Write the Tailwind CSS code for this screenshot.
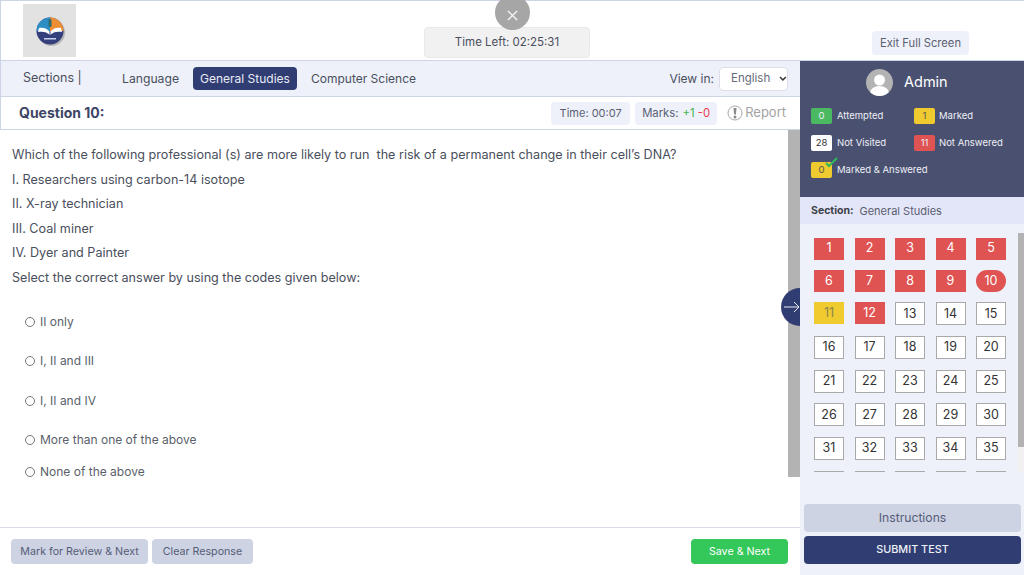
<!DOCTYPE html>
<html lang="en">

<head>
    <meta charset="UTF-8">
    <meta name="viewport" content="width=device-width, initial-scale=1.0">
    <title>Online Test</title>
    <script src="https://cdn.jsdelivr.net/npm/@tailwindcss/browser@4"></script>
</head>

<body class="bg-white font-['Inter','Liberation_Sans',sans-serif] text-[#4a4f5c] overflow-hidden">
    <div class="relative w-[1024px] h-[575px] overflow-hidden flex flex-col">

        <!-- top header -->
        <header class="relative h-[61px] shrink-0 border-t border-l border-b border-[#cdd4e6] flex">
            <div class="ml-[22px] mt-[3px] w-[53px] h-[53px] bg-[#e2e2e2] flex items-center justify-center">
                <svg width="34" height="34" viewBox="0 0 34 34">
                    <circle cx="18.500" cy="18.500" r="13.500" fill="#b5b5b5" />
                    <circle cx="17" cy="17" r="13.500" fill="#33407c" />
                    <path d="M3.500 17a13.500 13.500 0 0 1 13.500-13.500V17z" fill="#2d8ec4" />
                    <path d="M17 3.500A13.500 13.500 0 0 1 30.500 17H17z" fill="#ef8f33" />
                    <path d="M6 14c4-1 8 0 11 4 3-4 7-5 11-4l1 4c-5-1-9 0-12 3-3-3-7-4-12-3z" fill="#fff" />
                    <path d="M17 18v3" stroke="#33407c" />
                    <rect x="15.500" y="5" width="3" height="8" rx="1" fill="#2f6d70" />
                    <rect x="11" y="24" width="12" height="1.500" fill="#c9d0ea" />
                </svg>
            </div>
            <div class="absolute left-[423px] top-[26px] w-[166px] h-[31px] rounded bg-[#f1f1f1] border border-[#e9e9e9] flex items-center justify-center text-[11.500px]">Time Left: 02:25:31</div>
            <button class="absolute left-[494px] top-[-6px] w-[35px] h-[35px] rounded-full bg-[#a6a6a6] flex items-center justify-center pt-[6px]">
                <svg width="11" height="11" viewBox="0 0 12 12" fill="none" stroke="#f5f5f5" stroke-width="1.500"><path d="M1 1l10 10M11 1L1 11" /></svg>
            </button>
            <button class="absolute left-[871px] top-[30px] w-[97px] h-[24px] rounded bg-[#eef1fa] text-[11.200px] text-[#5b6070]">Exit Full Screen</button>
        </header>

        <div class="flex flex-1 min-h-0">
            <!-- left column -->
            <main class="relative w-[800px] flex flex-col">
                <nav class="h-[36px] shrink-0 bg-[#eef1fa] border-b border-l border-[#cdd4e6] flex items-center text-[12px]">
                    <span class="ml-[22px] w-[99px] text-[12.500px]">Sections |</span>
                    <span class="w-[71px] pt-[1px] text-[12.200px]">Language</span>
                    <span class="w-[104px] h-[23px] rounded bg-[#303d73] text-[#e8ebf5] flex items-center justify-center">General Studies</span>
                    <span class="ml-[14px] pt-[1px]">Computer Science</span>
                    <span class="ml-auto mr-[5px]">View in:</span>
                    <span class="w-[69px] h-[24px] mr-[12px] pt-[1px] rounded bg-white border border-[#dcdfe8] text-[11.500px] flex items-center pl-[11px] gap-[9px] text-[#666b78]">English
                        <svg width="8" height="6" viewBox="0 0 8 6" fill="none" stroke="#333" stroke-width="1.500"><path d="M1 1l3 3 3-3" /></svg>
                    </span>
                </nav>

                <div class="h-[33px] shrink-0 border-b border-l border-[#cdd4e6] flex items-center">
                    <h2 class="ml-[18px] -mt-[1px] text-[14px] font-bold text-[#3d4566]">Question 10:</h2>
                    <span class="ml-auto h-[23px] w-[79px] rounded bg-[#eef1fa] flex items-center justify-center text-[11px] text-[#5a6072]">Time: 00:07</span>
                    <span class="ml-[5px] h-[23px] w-[82px] rounded bg-[#eef1fa] flex items-center justify-center gap-[4px] text-[11.300px] text-[#5a6072]">Marks: <span><span class="text-[#3eb54f]">+1</span> <span class="text-[#f0354a]">-0</span></span></span>
                    <span class="ml-[10px] mr-[14px] flex items-center gap-[2px] text-[13px] text-[#a3a3a3]">
                        <svg width="16" height="16" viewBox="0 0 16 16" fill="none">
                            <circle cx="8" cy="8" r="7" stroke="#a8a8a8" />
                            <path d="M6.500 3h3l-.6 6.500H7.100z" fill="#8a8a8a" />
                            <circle cx="8" cy="12" r="1.500" fill="#8a8a8a" />
                        </svg>Report</span>
                </div>

                <div class="relative flex-1 min-h-0">
                    <div class="absolute right-0 top-0 w-[12px] h-[347px] bg-[#b3b3b3]"></div>
                    <div class="pl-[12px] pt-[13px] text-[12.600px] text-[#4a4f5c]">
                        <p class="h-[24.500px] leading-[24px]">Which of the following professional (s) are more likely to run&nbsp; the risk of a permanent change in their cell’s DNA?</p>
                        <p class="h-[24.500px] leading-[24px]">I. Researchers using carbon-14 isotope</p>
                        <p class="h-[24.500px] leading-[24px]">II. X-ray technician</p>
                        <p class="h-[24.500px] leading-[24px]">III. Coal miner</p>
                        <p class="h-[24.500px] leading-[24px]">IV. Dyer and Painter</p>
                        <p class="h-[24.500px] leading-[24px]">Select the correct answer by using the codes given below:</p>
                    </div>
                    <ul class="absolute left-[25px] top-[172px] flex flex-col text-[12px] text-[#5a5f6b]">
                        <li class="h-[39px] flex items-center gap-[5px]"><span class="w-[10px] h-[10px] rounded-full border border-[#777]"></span>II only</li>
                        <li class="h-[40px] flex items-center gap-[5px]"><span class="w-[10px] h-[10px] rounded-full border border-[#777]"></span>I, II and III</li>
                        <li class="h-[39px] flex items-center gap-[5px]"><span class="w-[10px] h-[10px] rounded-full border border-[#777]"></span>I, II and IV</li>
                        <li class="h-[39px] flex items-center gap-[5px]"><span class="w-[10px] h-[10px] rounded-full border border-[#777]"></span>More than one of the above</li>
                        <li class="h-[25px] flex items-center gap-[5px]"><span class="w-[10px] h-[10px] rounded-full border border-[#777]"></span>None of the above</li>
                    </ul>
                </div>

                <footer class="h-[48px] shrink-0 border-t border-[#d9dae6] flex items-center pl-[11px] pr-[12px] gap-[4px] text-[10.700px] text-[#555c78]">
                    <button class="w-[137px] h-[25px] pt-[1px] rounded bg-[#cdd3e2]">Mark for Review &amp; Next</button>
                    <button class="w-[101px] h-[25px] pt-[1px] rounded bg-[#cdd3e2]">Clear Response</button>
                    <button class="ml-auto w-[97px] h-[25px] pt-[1px] rounded bg-[#34c759] text-white">Save &amp; Next</button>
                </footer>

                <button class="absolute left-[781px] top-[227px] w-[19px] h-[38px] rounded-l-full bg-[#303d73] flex items-center justify-end">
                    <svg width="17" height="12" viewBox="0 0 17 12" fill="none" stroke="#e8ebf5" stroke-width="1"><path d="M1 6h15M11 1l5 5-5 5" /></svg>
                </button>
            </main>

            <!-- right column -->
            <aside class="w-[224px] flex flex-col bg-[#eef1fa]">
                <div class="h-[136px] shrink-0 bg-[#4a5170] text-white">
                    <div class="h-[43px] flex items-center pl-[66px] gap-[11px]">
                        <svg width="27" height="27" viewBox="0 0 27 27">
                            <clipPath id="avatar"><circle cx="13.500" cy="13.500" r="13.500" /></clipPath>
                            <g clip-path="url(#avatar)">
                                <rect width="27" height="27" fill="#b3b3b3" />
                                <circle cx="13.500" cy="11" r="5.500" fill="#fff" />
                                <ellipse cx="13.500" cy="24" rx="9.500" ry="7" fill="#fff" />
                            </g>
                        </svg>
                        <span class="text-[14.500px] mb-[2px]">Admin</span>
                    </div>
                    <div class="grid grid-cols-[103px_1fr] pl-[11px] mt-[4px] text-[9.500px] text-[#eef0f7] gap-y-[11px]">
                        <div class="flex items-center gap-[5px]"><span class="w-[21px] h-[16px] rounded-[2px] bg-[#4bb862] flex items-center justify-center">0</span>Attempted</div>
                        <div class="flex items-center gap-[4px]"><span class="w-[21px] h-[16px] rounded-[2px] bg-[#efcb2f] text-[#555] flex items-center justify-center">1</span>Marked</div>
                        <div class="flex items-center gap-[5px]"><span class="w-[21px] h-[16px] rounded-[2px] bg-white text-[#333] flex items-center justify-center">28</span>Not Visited</div>
                        <div class="flex items-center gap-[4px]"><span class="w-[21px] h-[16px] rounded-[2px] bg-[#df5452] flex items-center justify-center">11</span>Not Answered</div>
                        <div class="col-span-2 flex items-center gap-[5px]">
                            <span class="relative w-[21px] h-[16px] rounded-[2px] bg-[#efcb2f] text-[#555] flex items-center justify-center">0
                                <svg class="absolute left-[14px] top-[-5px]" width="14" height="11" viewBox="0 0 14 11" fill="none" stroke="#2fb85a" stroke-width="2"><path d="M1 6l3 3 8-8" /></svg>
                            </span>Marked &amp; Answered
                        </div>
                    </div>
                </div>
                <div class="h-[27px] pt-[1px] shrink-0 bg-[#e3e5f8] flex items-center pl-[11px] gap-[6px] text-[10.500px]">
                    <b class="text-[#3d3f48]">Section:</b><span class="text-[11px] text-[#5b6070]">General Studies</span>
                </div>

                <div class="relative h-[239px] shrink-0 mt-[9px] overflow-hidden">
                    <div class="absolute right-0 top-0 w-[6px] h-full bg-[#f1f1f1]"></div>
                    <div class="absolute right-0 top-0 w-[6px] h-[214px] bg-[#b3b3b3]"></div>
                    <div class="grid grid-cols-[repeat(5,30px)] gap-x-[10.500px] gap-y-[10.700px] items-start pl-[14px] pt-[5px] text-[12.500px] text-[#333]">
                        <span class="h-[21.500px] bg-[#df5452] text-white flex items-center justify-center">1</span>
                        <span class="h-[21.500px] bg-[#df5452] text-white flex items-center justify-center">2</span>
                        <span class="h-[21.500px] bg-[#df5452] text-white flex items-center justify-center">3</span>
                        <span class="h-[21.500px] bg-[#df5452] text-white flex items-center justify-center">4</span>
                        <span class="h-[21.500px] bg-[#df5452] text-white flex items-center justify-center">5</span>
                        <span class="h-[21.500px] bg-[#df5452] text-white flex items-center justify-center">6</span>
                        <span class="h-[21.500px] bg-[#df5452] text-white flex items-center justify-center">7</span>
                        <span class="h-[21.500px] bg-[#df5452] text-white flex items-center justify-center">8</span>
                        <span class="h-[21.500px] bg-[#df5452] text-white flex items-center justify-center">9</span>
                        <span class="h-[21.500px] rounded-full bg-[#df5452] text-white flex items-center justify-center">10</span>
                        <span class="h-[22px] bg-[#efcb2f] text-[#8a8450] flex items-center justify-center">11</span>
                        <span class="h-[22px] bg-[#df5452] text-white flex items-center justify-center">12</span>
                        <span class="h-[23px] bg-white border border-[#a9a9a9] flex items-center justify-center">13</span>
                        <span class="h-[23px] bg-white border border-[#a9a9a9] flex items-center justify-center">14</span>
                        <span class="h-[23px] bg-white border border-[#a9a9a9] flex items-center justify-center">15</span>
                        <span class="h-[23px] bg-white border border-[#a9a9a9] flex items-center justify-center">16</span>
                        <span class="h-[23px] bg-white border border-[#a9a9a9] flex items-center justify-center">17</span>
                        <span class="h-[23px] bg-white border border-[#a9a9a9] flex items-center justify-center">18</span>
                        <span class="h-[23px] bg-white border border-[#a9a9a9] flex items-center justify-center">19</span>
                        <span class="h-[23px] bg-white border border-[#a9a9a9] flex items-center justify-center">20</span>
                        <span class="h-[23px] bg-white border border-[#a9a9a9] flex items-center justify-center">21</span>
                        <span class="h-[23px] bg-white border border-[#a9a9a9] flex items-center justify-center">22</span>
                        <span class="h-[23px] bg-white border border-[#a9a9a9] flex items-center justify-center">23</span>
                        <span class="h-[23px] bg-white border border-[#a9a9a9] flex items-center justify-center">24</span>
                        <span class="h-[23px] bg-white border border-[#a9a9a9] flex items-center justify-center">25</span>
                        <span class="h-[23px] bg-white border border-[#a9a9a9] flex items-center justify-center">26</span>
                        <span class="h-[23px] bg-white border border-[#a9a9a9] flex items-center justify-center">27</span>
                        <span class="h-[23px] bg-white border border-[#a9a9a9] flex items-center justify-center">28</span>
                        <span class="h-[23px] bg-white border border-[#a9a9a9] flex items-center justify-center">29</span>
                        <span class="h-[23px] bg-white border border-[#a9a9a9] flex items-center justify-center">30</span>
                        <span class="h-[23px] bg-white border border-[#a9a9a9] flex items-center justify-center">31</span>
                        <span class="h-[23px] bg-white border border-[#a9a9a9] flex items-center justify-center">32</span>
                        <span class="h-[23px] bg-white border border-[#a9a9a9] flex items-center justify-center">33</span>
                        <span class="h-[23px] bg-white border border-[#a9a9a9] flex items-center justify-center">34</span>
                        <span class="h-[23px] bg-white border border-[#a9a9a9] flex items-center justify-center">35</span>
                        <span class="h-[23px] bg-white border border-[#a9a9a9]"></span>
                        <span class="h-[23px] bg-white border border-[#a9a9a9]"></span>
                        <span class="h-[23px] bg-white border border-[#a9a9a9]"></span>
                        <span class="h-[23px] bg-white border border-[#a9a9a9]"></span>
                        <span class="h-[23px] bg-white border border-[#a9a9a9]"></span>
                    </div>
                </div>

                <div class="mt-auto mb-[11px] pl-[4px] pr-[3px] flex flex-col gap-[4px]">
                    <button class="h-[28px] rounded bg-[#cdd3e2] text-[12.200px] text-[#555c78]">Instructions</button>
                    <button class="h-[28px] rounded bg-[#303d73] text-[10.800px] font-medium text-[#eef0f7]">SUBMIT TEST</button>
                </div>
            </aside>
        </div>
    </div>
</body>

</html>
